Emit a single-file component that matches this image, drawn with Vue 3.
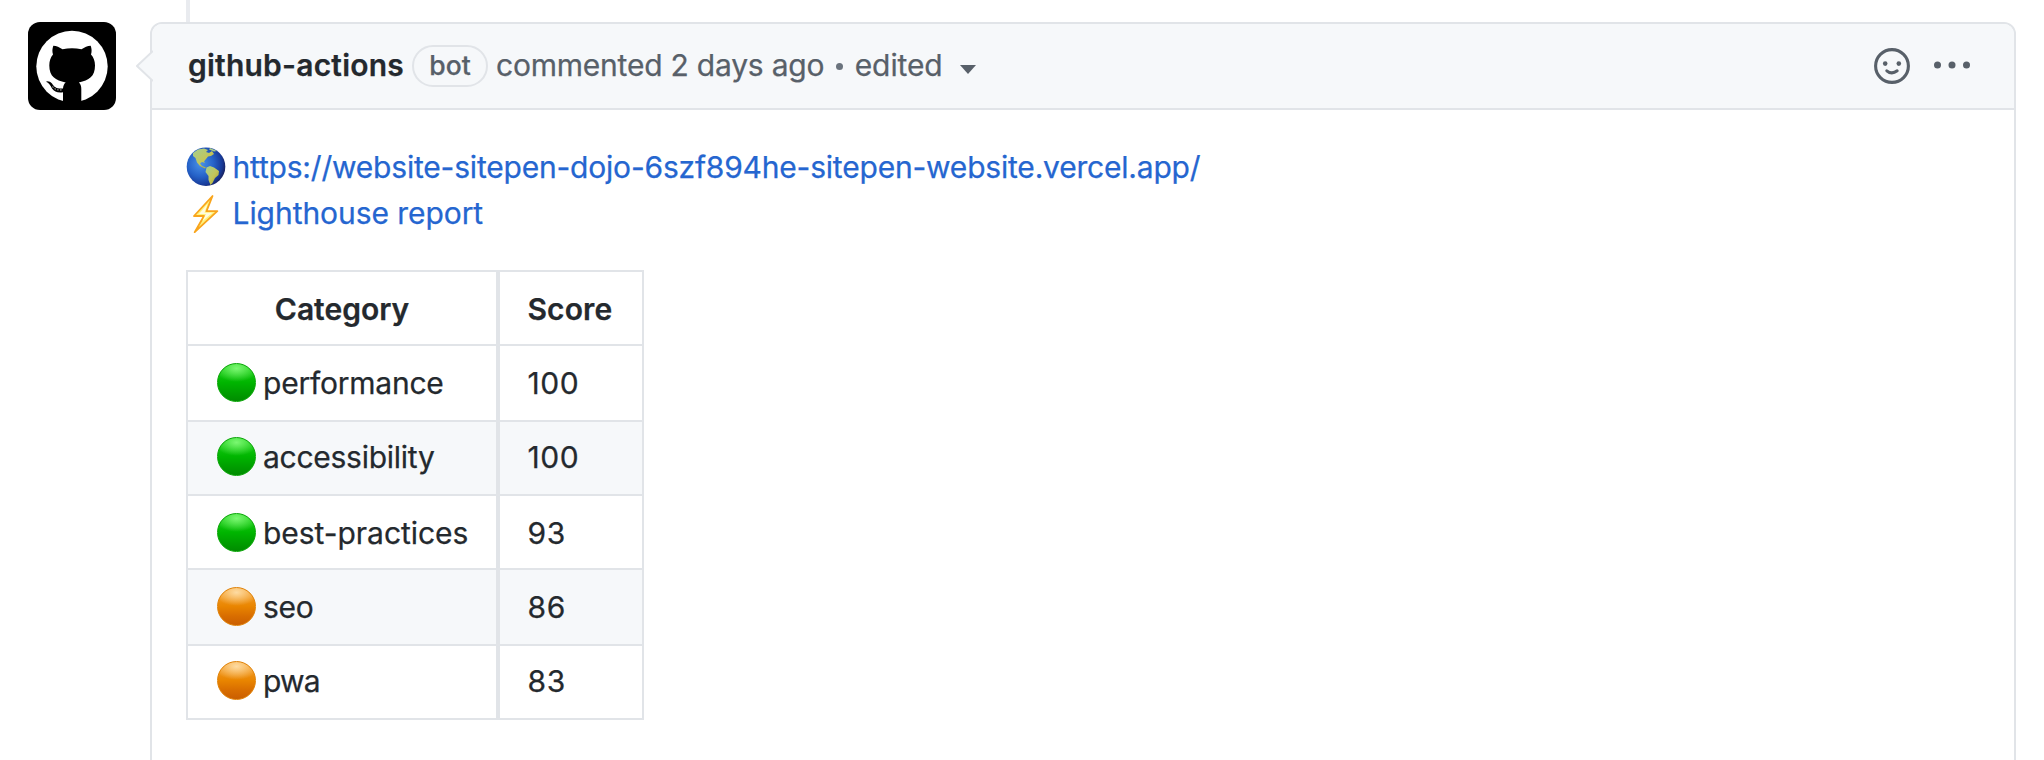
<script setup>
const rows = [
  { name: 'performance', score: 100, tone: 'green' },
  { name: 'accessibility', score: 100, tone: 'green' },
  { name: 'best-practices', score: 93, tone: 'green' },
  { name: 'seo', score: 86, tone: 'orange' },
  { name: 'pwa', score: 83, tone: 'orange' },
]
</script>

<template>
  <div class="page">
    <span class="timeline"></span>
    <svg class="avatar" viewBox="0 0 88 88">
      <rect width="88" height="88" rx="12" fill="#000" />
      <circle cx="44" cy="44.4" r="35.7" fill="#fff" />
      <path fill="#000" d="M35 84V70.2C29.500 71 26.500 69.500 24 66.500C22 63 21 60.500 18 59.700C19 58.700 22 59 24 61.500C26.500 65.500 29 67 35 66.500C35.300 63.500 36 61.700 37.700 60.400C27.500 58.500 21.300 54.500 21.300 43.500C21.300 39 22.500 35.500 25 32.500C24 29.500 24.300 26.500 25.300 23.700C28.500 23.700 31.500 25.300 34.500 27.300C41 25.900 47 25.900 53.500 27.300C56.500 25.300 59.500 23.700 62.700 23.700C63.700 26.500 64 29.500 63 32.500C65.700 35.500 67 39 67 43.500C67 54.500 61 58.500 50.800 60.400C52.800 62 53.300 64.500 53.300 67V84Z" />
      <path d="M24.500 64.500C27 68 30 68.200 35 67.800" fill="none" stroke="#fff" stroke-width="1.100" stroke-dasharray="1.300 1.700" opacity=".75" />
    </svg>
    <article class="card">
      <svg class="arrow" viewBox="0 0 17 32"><path d="M17 1L1 16L17 31" fill="#f6f8fa" stroke="#e1e4e8" stroke-width="2" /></svg>
      <header class="head">
        <strong class="author">github-actions</strong>
        <span class="bot">bot</span>
        <span class="when">commented 2 days ago</span>
        <i class="dot"></i>
        <span class="edited">edited</span>
        <i class="caret"></i>
        <svg class="smile" viewBox="0 0 36 36" fill="none" stroke="#586069">
          <circle cx="18" cy="18" r="16.4" stroke-width="3.1" />
          <path d="M12.800 22.800q5 4.200 10.400 0" stroke-width="3" stroke-linecap="round" />
          <circle cx="11.2" cy="15.6" r="2.3" fill="#586069" stroke="none" />
          <circle cx="24.8" cy="15.6" r="2.3" fill="#586069" stroke="none" />
        </svg>
        <svg class="kebab" viewBox="0 0 36 8" fill="#586069"><circle cx="3.5" cy="4" r="3.500" /><circle cx="18" cy="4" r="3.500" /><circle cx="32.5" cy="4" r="3.500" /></svg>
      </header>
      <div class="body">
        <p class="line">
          <svg class="emoji" viewBox="0 0 40 40">
            <defs>
              <radialGradient id="sea" cx=".36" cy=".42" r=".68"><stop offset="0" stop-color="#4a92e8" /><stop offset=".5" stop-color="#2562c8" /><stop offset=".82" stop-color="#183a98" /><stop offset="1" stop-color="#191c52" /></radialGradient>
              <linearGradient id="land" x1="0" y1="0" x2="1" y2="1"><stop offset="0" stop-color="#a3cf92" /><stop offset=".55" stop-color="#c3c65a" /><stop offset="1" stop-color="#a69a2c" /></linearGradient>
              <clipPath id="disc"><circle cx="20" cy="19.700" r="19.300" /></clipPath>
            </defs>
            <circle cx="20" cy="19.700" r="19.300" fill="url(#sea)" />
            <g clip-path="url(#disc)" fill="url(#land)">
              <path d="M7 6L12 2.500L18 1.500L22 3L20 5L23 6L26 4L28 7L25 9L22 9.500L20 12L18 14.500L19 16L16 15L14 16.500L16 19L20 20.500L19 21.500L14 19L11 15.500L9.500 11L7 9Z" />
              <path d="M24 1L31 4L28 4.500L23 2.500Z" fill="#a7ca89" />
              <path d="M20.500 20.500L24 19L28 20.500L33 24L32.500 28L29 31L26.500 36L24.500 38L22.500 33L22.500 29L19.500 25Z" />
            </g>
          </svg>
          <a class="url">https://website-sitepen-dojo-6szf894he-sitepen-website.vercel.app/</a>
        </p>
        <p class="line">
          <svg class="emoji" viewBox="0 0 40 40">
            <path d="M26.500 3L8 23H18L8.700 39.200L31.300 18.200H20.500Z" fill="#fff27c" stroke="#f9a51c" stroke-width="1.800" stroke-linejoin="round" />
            <path d="M21.500 11L13 21H20L16.500 28L26.500 19.800H18.500Z" fill="#fffbe0" />
          </svg>
          <a class="report">Lighthouse report</a>
        </p>
        <div class="table">
          <div class="row"><b class="cell category">Category</b><b class="cell score">Score</b></div>
          <div v-for="r in rows" :key="r.name" class="row">
            <div class="cell category"><i class="ball" :class="r.tone"></i><span :class="r.name">{{ r.name }}</span></div>
            <div class="cell score">{{ r.score }}</div>
          </div>
        </div>
      </div>
    </article>
  </div>
</template>

<style>
body { background: #fff; overflow: hidden; }
</style>

<style scoped>
.page { position: relative; box-sizing: border-box; height: 760px; padding: 22px 28px 0; display: flex; gap: 34px; overflow: hidden; font: 30px/46px Inter, sans-serif; color: #24292e; -webkit-text-stroke: .25px; }
.timeline { position: absolute; left: 186px; top: 0; width: 4px; height: 22px; background: #e9ebef; }
.avatar { width: 88px; height: 88px; flex: none; }
.card { position: relative; flex: 1; height: 800px; border: 2px solid #e1e4e8; border-radius: 12px; }
.arrow { position: absolute; left: -16px; top: 26px; width: 17px; height: 32px; }
.head { box-sizing: border-box; height: 86px; display: flex; align-items: center; background: #f6f8fa; border-bottom: 2px solid #e1e4e8; border-radius: 10px 10px 0 0; padding: 0 44px 2px 36px; color: #586069; white-space: nowrap; }
.author { color: #24292e; font-weight: 600; letter-spacing: .22px; }
.bot { box-sizing: border-box; width: 76px; height: 42px; border: 2px solid #e1e4e8; border-radius: 21px; margin: 2px 8px 0 8px; font-size: 26.500px; line-height: 37px; text-align: center; font-weight: 500; }
.when { letter-spacing: -.22px; }
.dot { width: 7px; height: 7px; border-radius: 50%; background: #6a737d; margin: 3px 12px 0 11.500px; }
.edited { letter-spacing: -.1px; }
.caret { margin: 8px auto 0 17.500px; border: 8px solid transparent; border-top: 9px solid #586069; border-bottom: 0; }
.smile { width: 36px; height: 36px; margin: 2px 24px 0 0; }
.kebab { width: 36px; height: 8px; }
.body { padding: 34px; }
.line { margin: 0; height: 46px; display: flex; align-items: center; color: #2566d0; }
.emoji { width: 40px; height: 40px; margin-right: 6.500px; }
.url { letter-spacing: -.2px; }
.report { letter-spacing: -.06px; }
.table { box-sizing: border-box; width: 458px; margin-top: 34px; border: 2px solid #e1e4e8; border-top: 0; }
.row { box-sizing: border-box; display: flex; height: 74px; border-top: 2px solid #e1e4e8; }
.row:nth-child(2), .row:nth-child(5) { height: 76px; }
.row:nth-child(2n + 3) { background: #f6f8fa; }
.cell { box-sizing: border-box; display: flex; padding-top: 14px; font-weight: 400; }
.row:nth-child(3n) .cell { padding-top: 12px; }
b.cell { font-weight: 600; letter-spacing: 0; }
.category { width: 312px; border-right: 4px solid #e1e4e8; padding-left: 28.500px; }
b.category { justify-content: center; padding-left: 0; }
.score { padding-left: 27.500px; letter-spacing: .6px; }
b.score { letter-spacing: .1px; }
.ball { box-sizing: border-box; width: 39px; height: 39px; margin: 3px 7.500px 0 0; border-radius: 50%; }
.green { background: radial-gradient(ellipse 60% 36% at 50% 12%, rgba(140, 255, 130, .85), rgba(80, 235, 70, 0)), linear-gradient(#22d41d, #00b500 50%, #00a000 75%, #008c00); border: 1px solid #0aa507; }
.orange { background: radial-gradient(ellipse 60% 36% at 50% 12%, rgba(255, 226, 175, .9), rgba(255, 190, 90, 0)), linear-gradient(#f7a535, #e98500 50%, #d96e00 75%, #ca5e00); border: 1px solid #e08208; }
.performance { letter-spacing: -.23px; }
.accessibility { letter-spacing: -.27px; }
.best-practices { letter-spacing: -.04px; }
.seo { letter-spacing: -.3px; }
.pwa { letter-spacing: -.8px; }
</style>
